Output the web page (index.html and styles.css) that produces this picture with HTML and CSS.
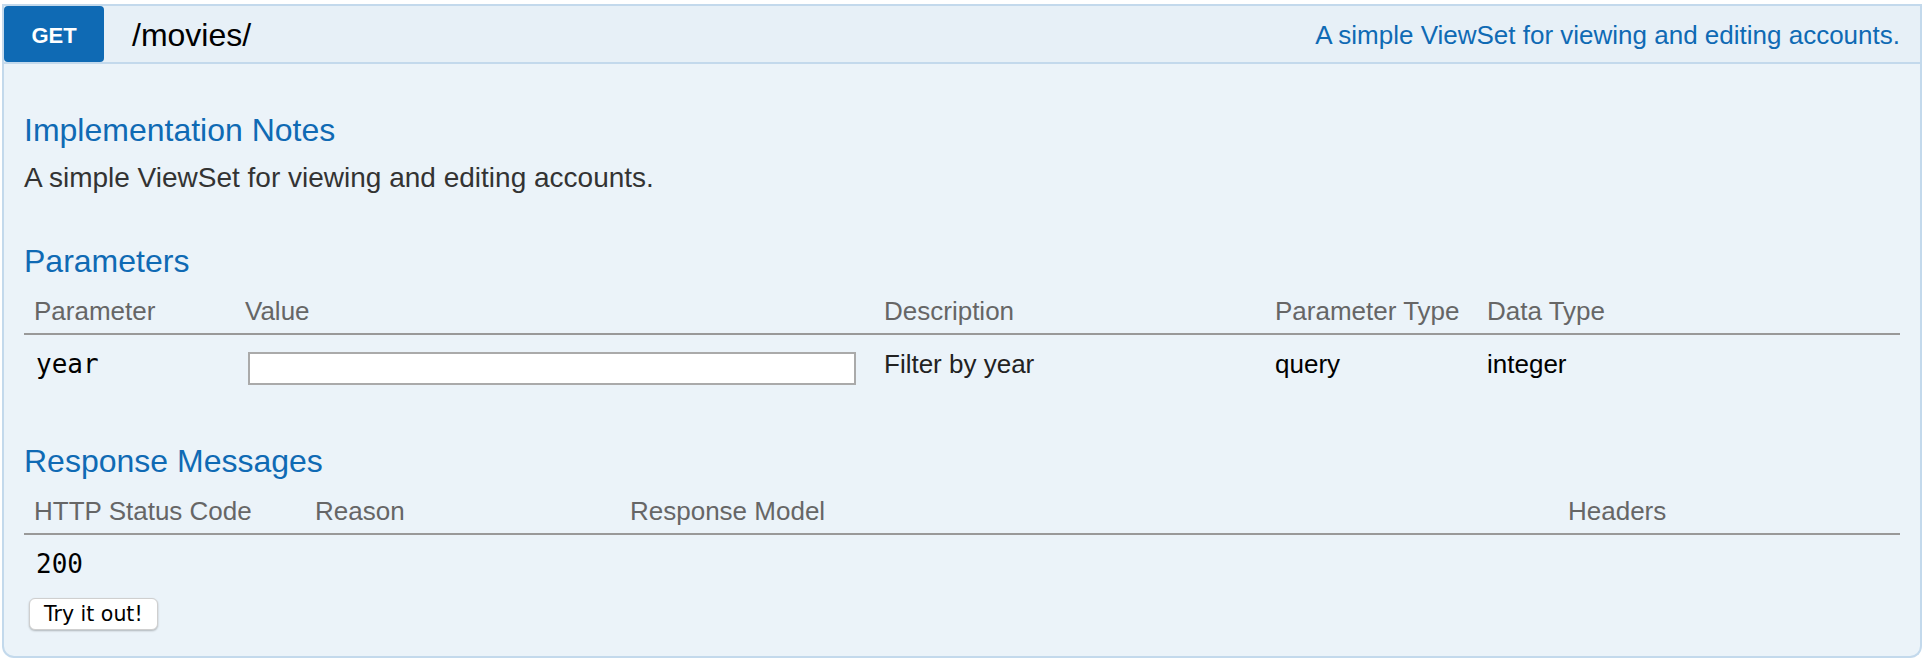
FILE: index.html
```html
<!DOCTYPE html>
<html>
<head>
<meta charset="utf-8">
<title>/movies/</title>
<link rel="stylesheet" href="styles.css">
</head>
<body>
<div class="operation">
  <div class="heading">
    <span class="method">GET</span>
    <span class="path">/movies/</span>
    <span class="summary">A simple ViewSet for viewing and editing accounts.</span>
  </div>
  <div class="content">
    <h4 class="section-title">Implementation Notes</h4>
    <p class="notes">A simple ViewSet for viewing and editing accounts.</p>

    <h4 class="section-title">Parameters</h4>
    <table class="grid params">
      <colgroup>
        <col class="c-param"><col class="c-value"><col class="c-desc"><col class="c-ptype"><col>
      </colgroup>
      <thead>
        <tr><th>Parameter</th><th>Value</th><th>Description</th><th>Parameter Type</th><th>Data Type</th></tr>
      </thead>
      <tbody>
        <tr>
          <td class="code">year</td>
          <td><input class="value-input" type="text"></td>
          <td class="desc">Filter by year</td>
          <td>query</td>
          <td>integer</td>
        </tr>
      </tbody>
    </table>

    <h4 class="section-title">Response Messages</h4>
    <table class="grid responses">
      <colgroup>
        <col class="c-code"><col class="c-reason"><col class="c-model"><col>
      </colgroup>
      <thead>
        <tr><th>HTTP Status Code</th><th>Reason</th><th>Response Model</th><th class="headers-col">Headers</th></tr>
      </thead>
      <tbody>
        <tr><td class="code">200</td><td></td><td></td><td></td></tr>
      </tbody>
    </table>

    <div class="actions">
      <button class="try-btn" type="button">Try it out!</button>
    </div>
  </div>
</div>
</body>
</html>
```

FILE: styles.css
```css
html, body {
  margin: 0;
  padding: 0;
  background: #ffffff;
}

body {
  font-family: "Liberation Sans", Arial, sans-serif;
  line-height: 1;
  color: #000;
}

.operation {
  margin: 4px 8px 0 2px;
}

.heading {
  display: flex;
  align-items: center;
  background: #e7f0f7;
  border: 2px solid #c3d9ec;
  height: 56px;
}

.method {
  display: flex;
  align-items: center;
  justify-content: center;
  box-sizing: border-box;
  width: 100px;
  height: 56px;
  padding-top: 4px;
  background: #0f6ab4;
  color: #ffffff;
  border-radius: 4px;
  font-weight: bold;
  font-size: 22px;
  text-transform: uppercase;
}

.path {
  margin-left: 28px;
  padding-top: 2px;
  font-size: 32px;
  color: #000;
}

.summary {
  margin-left: auto;
  padding-right: 20px;
  padding-top: 2px;
  font-size: 26px;
  color: #0f6ab4;
}

.content {
  background: #ebf3f9;
  border: 2px solid #c3d9ec;
  border-top: none;
  border-radius: 0 0 12px 12px;
  padding: 20px 20px 20px 20px;
}

.section-title {
  margin: 0;
  padding: 30px 0 10px;
  font-size: 32px;
  line-height: 32px;
  font-weight: normal;
  color: #0f6ab4;
}

.notes {
  margin: 8px 0 23px;
  font-size: 28px;
  line-height: 28px;
  color: #333;
}

.grid {
  width: 100%;
  border-collapse: collapse;
  table-layout: fixed;
}

.params {
  margin-bottom: 20px;
}

.c-param { width: 211px; }
.c-value { width: 639px; }
.c-desc { width: 391px; }
.c-ptype { width: 212px; }

.c-code { width: 281px; }
.c-reason { width: 315px; }
.c-model { width: 938px; }

.grid th {
  text-align: left;
  font-weight: normal;
  font-size: 26px;
  line-height: 26px;
  color: #666;
  padding: 11px 10px 9px;
  border-bottom: 2px solid #999;
  white-space: nowrap;
}

.grid td {
  font-size: 26px;
  line-height: 26px;
  vertical-align: top;
  padding: 16px 10px 10px;
  color: #000;
}

.responses td {
  padding-top: 16px;
}

.grid td.code {
  font-family: "DejaVu Sans Mono", "Liberation Mono", monospace;
  font-size: 26px;
  padding-left: 12px;
}

.grid td.desc {
  color: #222;
}

.value-input {
  display: block;
  box-sizing: border-box;
  margin: 1px 0 0 3px;
  width: 608px;
  height: 33px;
  border: 2px solid #aaa;
  background: #fff;
  padding: 0 6px;
  font-size: 24px;
  font-family: "Liberation Sans", Arial, sans-serif;
}

.actions {
  padding: 11px 0 6px 5px;
}

.try-btn {
  display: block;
  font-family: "DejaVu Sans", "Liberation Sans", sans-serif;
  font-size: 20.5px;
  line-height: 20px;
  color: #000;
  background: #ffffff;
  border: 1px solid #cfcfcf;
  border-radius: 6px;
  box-shadow: 0 1px 2px rgba(0, 0, 0, 0.25);
  padding: 5px 14px;
  height: 32px;
  box-sizing: border-box;
}
```
